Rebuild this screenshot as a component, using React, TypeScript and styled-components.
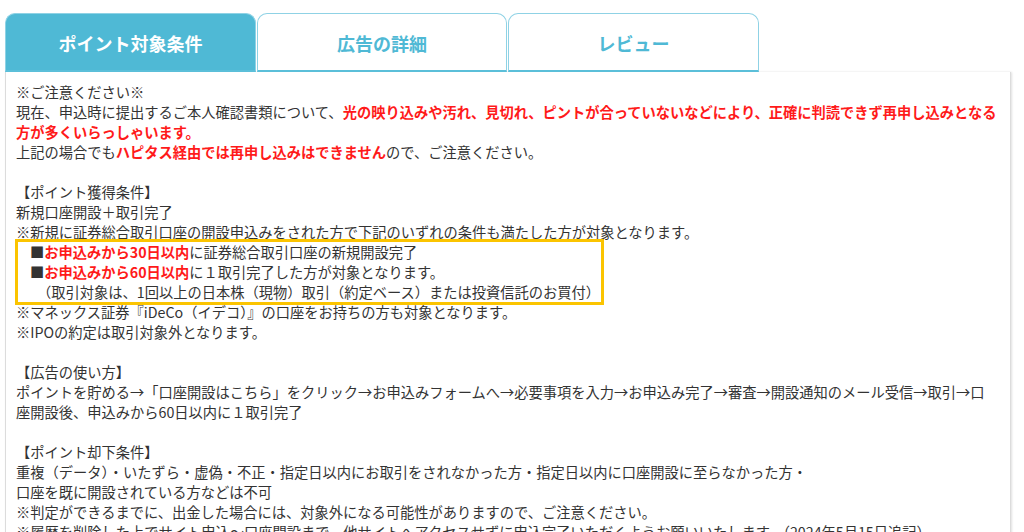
import React from "react";
import styled, { createGlobalStyle } from "styled-components";

const Global = createGlobalStyle`
  html, body { margin: 0; padding: 0; background: #fff; }
  body { font-family: "Noto Sans CJK JP", "Noto Sans", sans-serif; color: #333; }
`;

const Wrap = styled.div`
  width: 1006px;
  padding: 13px 0 0 5px;
`;

const TabList = styled.div`
  display: flex;
  gap: 1px;
`;

const Tab = styled.div<{ $active?: boolean; $w: number }>`
  flex: 0 0 ${(p) => p.$w}px;
  box-sizing: border-box;
  height: 59px;
  display: flex;
  align-items: center;
  justify-content: center;
  border: 1px solid #8fd2e5;
  border-bottom: 2px solid #5bbfd9;
  border-radius: 10px 10px 0 0;
  background: ${(p) => (p.$active ? "#4fb9d5" : "#fff")};
  color: ${(p) => (p.$active ? "#fff" : "#4fb9d5")};
  font-size: 18px;
  font-weight: bold;
  padding-top: 2px;
`;

const Panel = styled.div`
  box-sizing: border-box;
  width: 1006px;
  border: 1px solid #dcdcdc;
  border-top: none;
  box-shadow: 1px 0 2px rgba(0, 0, 0, 0.12);
  padding: 10px 4px 10px 10px;
  font-size: 14.25px;
  line-height: 20px;
  color: #333;
  white-space: nowrap;
`;

const Line = styled.div``;

const Blank = styled.div`
  height: 20px;
`;

const Red = styled.span`
  color: #ff1a1a;
  font-weight: bold;
`;

const Highlight = styled.div`
  display: inline-block;
  outline: 3px solid #fbc400;
  margin-left: 2px;
  padding-right: 1px;
`;

const BoxLine = styled.div<{ $indent: number }>`
  padding-left: ${(p) => p.$indent}px;
`;

export default function App() {
  return (
    <>
      <Global />
      <Wrap>
        <TabList>
          <Tab $active $w={251}>ポイント対象条件</Tab>
          <Tab $w={250}>広告の詳細</Tab>
          <Tab $w={251}>レビュー</Tab>
        </TabList>
        <Panel>
          <Line>※ご注意ください※</Line>
          <Line>
            現在、申込時に提出するご本人確認書類について、
            <Red>
              光の映り込みや汚れ、見切れ、ピントが合っていないなどにより、正確に判読できず再申し込みとなる
              <br />
              方が多くいらっしゃいます。
            </Red>
          </Line>
          <Line>
            上記の場合でも<Red>ハピタス経由では再申し込みはできません</Red>ので、ご注意ください。
          </Line>
          <Blank />
          <Line>【ポイント獲得条件】</Line>
          <Line>新規口座開設＋取引完了</Line>
          <Line>※新規に証券総合取引口座の開設申込みをされた方で下記のいずれの条件も満たした方が対象となります。</Line>
          <Highlight>
            <BoxLine $indent={12}>
              ■<Red>お申込みから30日以内</Red>に証券総合取引口座の新規開設完了
            </BoxLine>
            <BoxLine $indent={12}>
              ■<Red>お申込みから60日以内</Red>に１取引完了した方が対象となります。
            </BoxLine>
            <BoxLine $indent={19}>
              （取引対象は、1回以上の日本株（現物）取引（約定ベース）または投資信託のお買付）
            </BoxLine>
          </Highlight>
          <Line>※マネックス証券『iDeCo（イデコ）』の口座をお持ちの方も対象となります。</Line>
          <Line>※IPOの約定は取引対象外となります。</Line>
          <Blank />
          <Line>【広告の使い方】</Line>
          <Line>
            ポイントを貯める→「口座開設はこちら」をクリック→お申込みフォームへ→必要事項を入力→お申込み完了→審査→開設通知のメール受信→取引→口
            <br />
            座開設後、申込みから60日以内に１取引完了
          </Line>
          <Blank />
          <Line>【ポイント却下条件】</Line>
          <Line>重複（データ）・いたずら・虚偽・不正・指定日以内にお取引をされなかった方・指定日以内に口座開設に至らなかった方・</Line>
          <Line>口座を既に開設されている方などは不可</Line>
          <Line>※判定ができるまでに、出金した場合には、対象外になる可能性がありますので、ご注意ください。</Line>
          <Line>※履歴を削除した上でサイト申込～口座開設まで、他サイトへアクセスせずに申込完了いただくようお願いいたします。（2024年5月15日追記）</Line>
        </Panel>
      </Wrap>
    </>
  );
}
